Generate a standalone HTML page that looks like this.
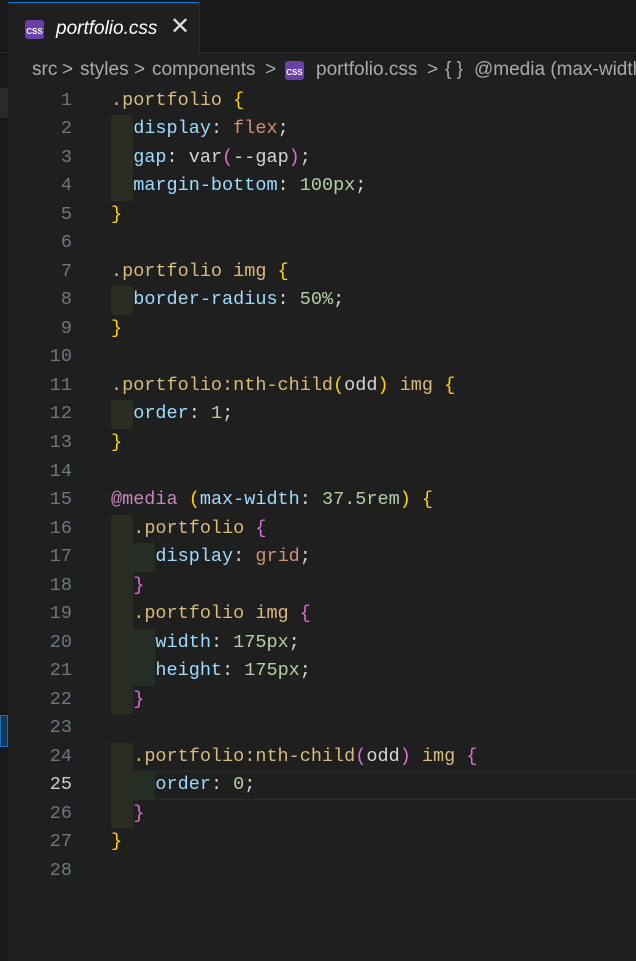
<!DOCTYPE html><html><head><style>
body{margin:0;width:636px;height:961px;background:#1f1f1f;overflow:hidden;position:relative;font-family:"Liberation Sans",sans-serif}
.tabbar{position:absolute;left:0;top:0;width:636px;height:52px;background:#181818;border-bottom:1px solid #2b2b2b}
.tab{position:absolute;left:8px;top:2px;width:191px;height:51px;background:#1f1f1f;border-top:1px solid #0078d4;border-right:1px solid #2b2b2b}
.ic{position:absolute;width:19px;height:19px;background:#6b3fa8;border-radius:3px;color:#fff;font-size:8px;font-weight:bold;text-align:center;line-height:23px}
.tt{position:absolute;left:48px;top:15px;font-style:italic;color:#fff;font-size:19px}
.x{position:absolute;left:162px;top:9px;color:#ddd;font-size:24px}
.bc{position:absolute;top:59px;color:#a9a9a9;font-size:19px;white-space:nowrap}
.side{position:absolute;left:0;top:53px;width:8px;height:908px;background:#181818}
.code{position:absolute;left:0;top:0;font-family:"Liberation Mono",monospace;font-size:18.5px}
.ln{position:absolute;width:72px;text-align:right;color:#6e7681;height:28.5px;line-height:28.5px}
.l{position:absolute;left:111px;height:28.5px;line-height:28.5px;white-space:pre;color:#d4d4d4}
.g{position:absolute;height:28.5px}
.s{color:#d7ba7d}.b{color:#ffd700}.p{color:#da70d6}.k{color:#9cdcfe}.v{color:#ce9178}.n{color:#b5cea8}.m{color:#c586c0}
</style></head><body>
<div class="tabbar"><div class="tab"><div class="ic" style="left:17px;top:17px">CSS</div><div class="tt">portfolio.css</div><div class="x">✕</div></div></div>
<div class="side"></div>
<div style="position:absolute;left:0;top:88px;width:8px;height:30px;background:#2a2a2a"></div>
<div style="position:absolute;left:0;top:715px;width:6px;height:30px;background:#0e3a5e;border:1px solid #1a6fb0"></div>
<div class="bc" style="left:32px">src</div>
<div class="bc" style="left:62px">&gt;</div>
<div class="bc" style="left:80px">styles</div>
<div class="bc" style="left:134px">&gt;</div>
<div class="bc" style="left:152px">components</div>
<div class="bc" style="left:265px">&gt;</div>
<div class="ic" style="left:285px;top:61px">CSS</div>
<div class="bc" style="left:316px">portfolio.css</div>
<div class="bc" style="left:427px">&gt;</div>
<div class="bc" style="left:445px">{ }</div>
<div class="bc" style="left:474px">@media (max-width: 37.5rem)</div>
<div style="position:absolute;left:111px;top:771px;width:525px;height:27px;border:1px solid #2c2c2c;border-right:none"></div>
<div class="code" id="c"></div>
<script>
var L=[
'<span class="s">.portfolio</span> <span class="b">{</span>',
'  <span class="k">display</span>: <span class="v">flex</span>;',
'  <span class="k">gap</span>: var<span class="p">(</span>--gap<span class="p">)</span>;',
'  <span class="k">margin-bottom</span>: <span class="n">100px</span>;',
'<span class="b">}</span>','',
'<span class="s">.portfolio img</span> <span class="b">{</span>',
'  <span class="k">border-radius</span>: <span class="n">50%</span>;',
'<span class="b">}</span>','',
'<span class="s">.portfolio:nth-child</span><span class="b">(</span>odd<span class="b">)</span> <span class="s">img</span> <span class="b">{</span>',
'  <span class="k">order</span>: <span class="n">1</span>;',
'<span class="b">}</span>','',
'<span class="m">@media</span> <span class="b">(</span><span class="k">max-width</span>: <span class="n">37.5rem</span><span class="b">)</span> <span class="b">{</span>',
'  <span class="s">.portfolio</span> <span class="p">{</span>',
'    <span class="k">display</span>: <span class="v">grid</span>;',
'  <span class="p">}</span>',
'  <span class="s">.portfolio img</span> <span class="p">{</span>',
'    <span class="k">width</span>: <span class="n">175px</span>;',
'    <span class="k">height</span>: <span class="n">175px</span>;',
'  <span class="p">}</span>','',
'  <span class="s">.portfolio:nth-child</span><span class="p">(</span>odd<span class="p">)</span> <span class="s">img</span> <span class="p">{</span>',
'    <span class="k">order</span>: <span class="n">0</span>;',
'  <span class="p">}</span>',
'<span class="b">}</span>',''];
var g1=[2,3,4,8,12,16,17,18,19,20,21,22,24,25,26];var g2=[17,20,21,25];
var h='';
for(var i=0;i<L.length;i++){var t=101+28.52*i-14.25;var n=i+1;
if(g1.indexOf(n)>=0)h+='<div class="g" style="left:111px;width:22px;top:'+t+'px;background:#2c2d22"></div>';
if(g2.indexOf(n)>=0)h+='<div class="g" style="left:133px;width:22px;top:'+t+'px;background:#252e25"></div>';
h+='<div class="ln" style="top:'+t+'px;'+(n==25?'color:#ccc':'')+'">'+n+'</div>';
h+='<div class="l" style="top:'+t+'px">'+L[i]+'</div>';}
document.getElementById('c').innerHTML=h;
</script>
</body></html>
